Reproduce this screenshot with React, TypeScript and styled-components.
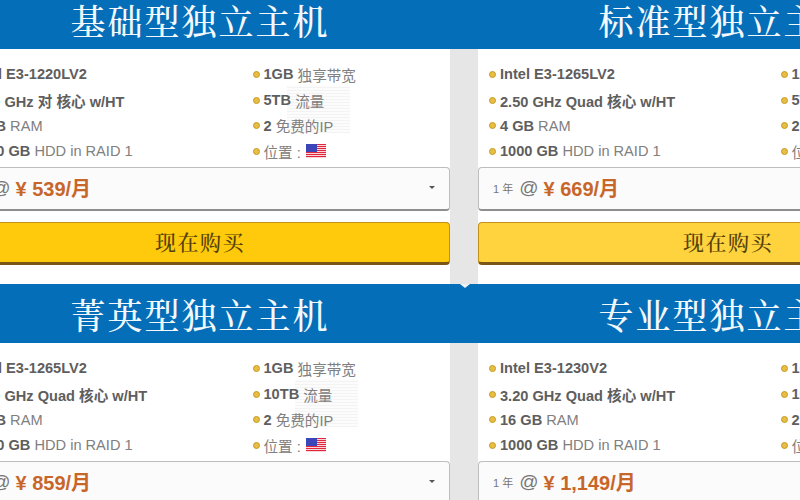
import styled, { createGlobalStyle } from "styled-components";

const GlobalStyle = createGlobalStyle`
  html, body { margin: 0; padding: 0; background: #fff; }
  body { width: 800px; height: 500px; overflow: hidden; font-family: "Liberation Sans", "Noto Sans CJK SC", sans-serif; }
`;

const Page = styled.div`
  width: 1028px;
  margin: -10px 0 0 -50px;
`;

const Band = styled.div<{ $notch?: boolean }>`
  position: relative;
  display: grid;
  grid-template-columns: 500px 500px;
  column-gap: 28px;
  height: 59px;
  background: #046eb8;

  ${({ $notch }) =>
    $notch &&
    `&::before {
      content: "";
      position: absolute;
      left: 510px;
      top: 0;
      border-left: 5px solid transparent;
      border-right: 5px solid transparent;
      border-top: 4px solid #f2f2f2;
    }`}
`;

const Title = styled.h2`
  margin: 0;
  padding-top: 9px;
  text-align: center;
  color: #f2f8fc;
  font-family: "Noto Serif CJK SC", "Noto Sans CJK SC", serif;
  font-size: 35px;
  font-weight: 500;
  letter-spacing: 2px;
  line-height: 42px;
`;

const Row = styled.div`
  display: grid;
  grid-template-columns: 500px 500px;
  column-gap: 28px;
  background: #e6e6e6;
`;

const Card = styled.div`
  background: #fff;
  height: 235px;
  box-sizing: border-box;
  padding-top: 12.5px;
`;

const Specs = styled.div`
  position: relative;
  display: grid;
  grid-template-columns: 291.5px 1fr;
  padding-left: 7px;
  height: 105.5px;
`;

const Haze = styled.div<{ $wide?: boolean }>`
  position: absolute;
  left: ${({ $wide }) => ($wide ? "345px" : "337px")};
  top: 23px;
  width: 63px;
  height: 48px;
  background: repeating-linear-gradient(0deg, #f3f3f3 0 1px, #fcfcfc 1px 3px);
  pointer-events: none;
`;

const List = styled.ul`
  position: relative;
  margin: 0;
  padding: 0;
  list-style: none;
`;

const Item = styled.li`
  display: flex;
  align-items: center;
  height: 25.7px;
  font-size: 14.6px;
  color: #808080;
  white-space: pre;

  &::before {
    content: "";
    width: 5px;
    height: 5px;
    margin: 0 4px 0 4px;
    border-radius: 50%;
    background: #e6bd45;
    border: 1px solid #c79a1e;
    box-sizing: content-box;
  }

  b { color: #5e5e5e; font-weight: 700; }
`;

const Flag = styled.svg`
  width: 20px;
  height: 14px;
  margin-left: 1px;
`;

const Select = styled.div`
  display: flex;
  align-items: center;
  box-sizing: border-box;
  height: 44px;
  padding: 0 14px 2px;
  background: #fbfbfb;
  border: 1px solid #bdbdbd;
  border-bottom: 2px solid #8e8e8e;
  border-radius: 4px;
  color: #777;
`;

const Term = styled.span`
  font-size: 11px;
  margin-right: 6px;
`;

const At = styled.span`
  font-size: 19px;
  margin-right: 5px;
`;

const Price = styled.span`
  font-size: 20px;
  font-weight: 700;
  color: #c8662a;
`;

const Caret = styled.span`
  margin-left: auto;
  border-left: 3.5px solid transparent;
  border-right: 3.5px solid transparent;
  border-top: 3.5px solid #555;
`;

const Buy = styled.button<{ $light?: boolean }>`
  display: block;
  width: 100%;
  height: 43px;
  margin-top: 11px;
  padding: 0 0 4px;
  background: ${({ $light }) => ($light ? "#ffd33d" : "#ffc90c")};
  border: 1px solid #c0901a;
  border-bottom: 3px solid #7a5518;
  border-radius: 4px;
  color: #54400a;
  font-family: "Noto Serif CJK SC", "Noto Sans CJK SC", serif;
  font-size: 21px;
  font-weight: 500;
  letter-spacing: 1.5px;
`;

type Plan = {
  title: string;
  cpu: string;
  speed: string;
  cores: string;
  ram: string;
  traffic: string;
  price: string;
  light?: boolean;
};

const rows: Plan[][] = [
  [
    { title: "基础型独立主机", cpu: "Intel E3-1220LV2", speed: "2.30 GHz", cores: "对", ram: "4 GB", traffic: "5TB", price: "539" },
    { title: "标准型独立主机", cpu: "Intel E3-1265LV2", speed: "2.50 GHz", cores: "Quad", ram: "4 GB", traffic: "5TB", price: "669", light: true },
  ],
  [
    { title: "菁英型独立主机", cpu: "Intel E3-1265LV2", speed: "2.50 GHz", cores: "Quad", ram: "8 GB", traffic: "10TB", price: "859" },
    { title: "专业型独立主机", cpu: "Intel E3-1230V2", speed: "3.20 GHz", cores: "Quad", ram: "16 GB", traffic: "10TB", price: "1,149" },
  ],
];

const UsFlag = () => (
  <Flag viewBox="0 0 20 14">
    <rect width="20" height="14" fill="#fff" />
    {[0, 2, 4, 6, 8, 10, 12].map((y) => (
      <rect key={y} y={y} width="20" height="1.2" fill="#e0283c" />
    ))}
    <rect width="11" height="8" fill="#3c46b8" />
  </Flag>
);

const PlanCard = ({ plan }: { plan: Plan }) => (
  <Card>
    <Specs>
      <Haze $wide={plan.traffic === "10TB"} />
      <List>
        <Item><b>{plan.cpu}</b></Item>
        <Item><b>{plan.speed} {plan.cores} 核心 w/HT</b></Item>
        <Item><b>{plan.ram}</b> RAM</Item>
        <Item><b>1000 GB</b> HDD in RAID 1</Item>
      </List>
      <List>
        <Item><b>1GB</b> 独享带宽</Item>
        <Item><b>{plan.traffic}</b> 流量</Item>
        <Item><b>2</b> 免费的IP</Item>
        <Item>位置 : <UsFlag /></Item>
      </List>
    </Specs>
    <Select>
      <Term>1 年</Term>
      <At>@</At>
      <Price>¥ {plan.price}/月</Price>
      <Caret />
    </Select>
    <Buy $light={plan.light}>现在购买</Buy>
  </Card>
);

export default function App() {
  return (
    <>
      <GlobalStyle />
      <Page>
        {rows.map((row, i) => (
          <div key={i}>
            <Band $notch={i === 1}>
              {row.map((plan) => (
                <Title key={plan.title}>{plan.title}</Title>
              ))}
            </Band>
            <Row>
              {row.map((plan) => (
                <PlanCard key={plan.title} plan={plan} />
              ))}
            </Row>
          </div>
        ))}
      </Page>
    </>
  );
}
